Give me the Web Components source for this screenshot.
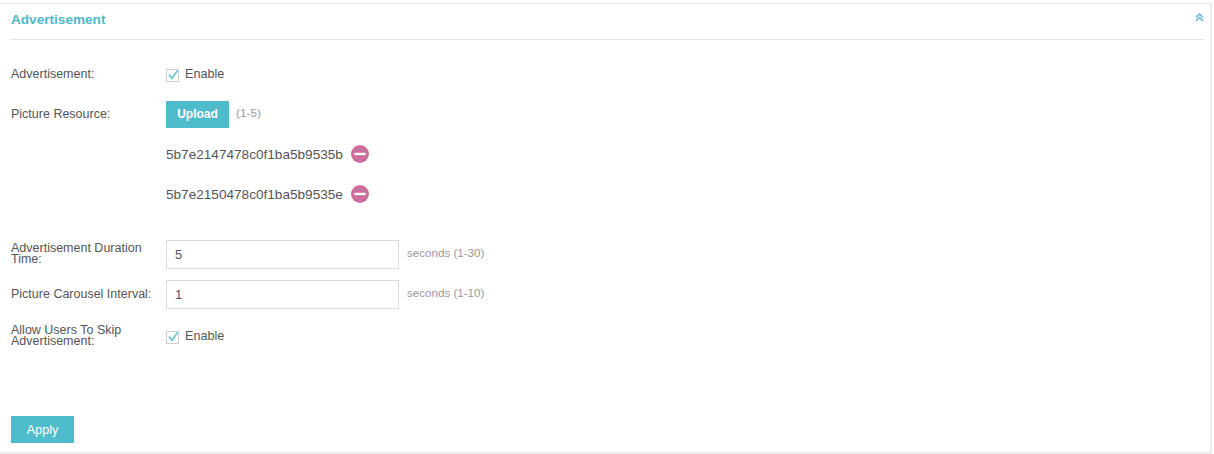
<!DOCTYPE html>
<html>
<head>
<meta charset="utf-8">
<style>
    html, body { margin: 0; padding: 0; background: #fff; }
    body { font-family: "Liberation Sans", Arial, sans-serif; font-size: 12px; color: #555; }
</style>
</head>
<body>
<ad-panel heading="Advertisement">
    <form-row label="Advertisement:"><check-box>Enable</check-box></form-row>
    <form-row label="Picture Resource:">
        <teal-button wide>Upload</teal-button><hint-text style="margin:0 0 2px 7px;font-size:11.8px">(1-5)</hint-text>
    </form-row>
    <form-row><file-item>5b7e2147478c0f1ba5b9535b</file-item></form-row>
    <form-row style="margin-bottom:20px"><file-item>5b7e2150478c0f1ba5b9535e</file-item></form-row>
    <form-row label="Advertisement Duration Time:"><text-field value="5"></text-field><hint-text style="margin:0 0 3px 8px">seconds (1-30)</hint-text></form-row>
    <form-row label="Picture Carousel Interval:"><text-field value="1"></text-field><hint-text style="margin:0 0 3px 8px">seconds (1-10)</hint-text></form-row>
    <form-row label="Allow Users To Skip Advertisement:" style="margin-top:2px"><check-box>Enable</check-box></form-row>
    <teal-button slot="footer">Apply</teal-button>
</ad-panel>

<script>
const panelTemplate = document.createElement('template');
panelTemplate.innerHTML = `
    <style>
        :host {
            display: block;
            box-sizing: border-box;
            width: 1212px;
            height: 451px;
            margin-top: 3px;
            border: 1px solid #ececec;
            border-left: 0;
            border-width: 1px 2px 2px 0;
            padding: 0 6px 0 10px;
        }
        .head {
            display: flex;
            align-items: center;
            justify-content: space-between;
            height: 35px;
            border-bottom: 1px solid #dfe3e6;
        }
        .title {
            font-size: 13.6px;
            font-weight: bold;
            color: #4cb9c9;
            padding: 0 0 5px 1px;
        }
        svg { width: 9px; height: 9px; margin: 0 0 8px 0; }
        .body { padding-top: 14px; }
        .foot { margin-top: 60px; padding-left: 1px; }
    </style>
    <div class="head">
        <span class="title"></span>
        <svg viewBox="0 0 9 9" fill="none" stroke="#6fbccb" stroke-width="1.6">
            <path d="M1 4.5 4.5 1 8 4.5"/>
            <path d="M1 8 4.5 4.5 8 8"/>
        </svg>
    </div>
    <div class="body"><slot></slot></div>
    <div class="foot"><slot name="footer"></slot></div>
`;

class AdPanel extends HTMLElement {
    constructor() {
        super();
        this.attachShadow({mode: 'open'});
        this.shadowRoot.appendChild(panelTemplate.content.cloneNode(true));
    }
    connectedCallback() {
        this.shadowRoot.querySelector('.title').textContent = this.getAttribute('heading');
    }
}

const rowTemplate = document.createElement('template');
rowTemplate.innerHTML = `
    <style>
        :host {
            display: flex;
            align-items: center;
            height: 40px;
        }
        .label {
            box-sizing: border-box;
            width: 156px;
            padding: 0 12px 0 1px;
            font-size: 12.5px;
            line-height: 11px;
            color: #555;
        }
        .control {
            display: flex;
            align-items: center;
        }
    </style>
    <div class="label"></div>
    <div class="control"><slot></slot></div>
`;

class FormRow extends HTMLElement {
    constructor() {
        super();
        this.attachShadow({mode: 'open'});
        this.shadowRoot.appendChild(rowTemplate.content.cloneNode(true));
    }
    connectedCallback() {
        this.shadowRoot.querySelector('.label').textContent = this.getAttribute('label') || '';
    }
}

const checkTemplate = document.createElement('template');
checkTemplate.innerHTML = `
    <style>
        :host {
            display: inline-flex;
            align-items: center;
            font-size: 12.6px;
            color: #555;
        }
        svg { width: 14px; height: 14px; margin: 1px 5px 0 0; }
    </style>
    <svg viewBox="0 0 14 14" fill="none">
        <rect x=".5" y="1.5" width="12" height="12" fill="#fff" stroke="#cfcfcf"/>
        <path d="M3 6.6 6 10.4 11.6 2.4" stroke="#6cc4d2" stroke-width="1.7"/>
    </svg>
    <slot></slot>
`;

class CheckBox extends HTMLElement {
    constructor() {
        super();
        this.attachShadow({mode: 'open'});
        this.shadowRoot.appendChild(checkTemplate.content.cloneNode(true));
    }
}

const buttonTemplate = document.createElement('template');
buttonTemplate.innerHTML = `
    <style>
        :host {
            display: inline-flex;
            align-items: center;
            justify-content: center;
            width: 63px;
            height: 27px;
            background: #4fbccb;
            color: #fff;
            font-size: 12.6px;
            cursor: pointer;
        }
        :host([wide]) { font-weight: bold; font-size: 12px; }
    </style>
    <slot></slot>
`;

class TealButton extends HTMLElement {
    constructor() {
        super();
        this.attachShadow({mode: 'open'});
        this.shadowRoot.appendChild(buttonTemplate.content.cloneNode(true));
    }
}

const hintTemplate = document.createElement('template');
hintTemplate.innerHTML = `
    <style>
        :host {
            display: inline-block;
            font-size: 11.6px;
            color: #999;
        }
    </style>
    <slot></slot>
`;

class HintText extends HTMLElement {
    constructor() {
        super();
        this.attachShadow({mode: 'open'});
        this.shadowRoot.appendChild(hintTemplate.content.cloneNode(true));
    }
}

const fileTemplate = document.createElement('template');
fileTemplate.innerHTML = `
    <style>
        :host {
            display: inline-flex;
            align-items: center;
            font-size: 13.6px;
            color: #555;
        }
        svg { width: 18px; height: 18px; margin-left: 8px; }
    </style>
    <slot></slot>
    <svg viewBox="0 0 18 18">
        <circle cx="9" cy="9" r="9" fill="#cc6f9c"/>
        <rect x="3.5" y="7.8" width="11" height="2.4" fill="#fff"/>
    </svg>
`;

class FileItem extends HTMLElement {
    constructor() {
        super();
        this.attachShadow({mode: 'open'});
        this.shadowRoot.appendChild(fileTemplate.content.cloneNode(true));
    }
}

const fieldTemplate = document.createElement('template');
fieldTemplate.innerHTML = `
    <style>
        :host { display: inline-block; }
        input {
            display: block;
            box-sizing: border-box;
            width: 233px;
            height: 29px;
            border: 1px solid #dcdcdc;
            padding: 0 8px;
            font: 13px "Liberation Sans", Arial, sans-serif;
            color: #555;
            outline: none;
        }
    </style>
    <input type="text">
`;

class TextField extends HTMLElement {
    constructor() {
        super();
        this.attachShadow({mode: 'open'});
        this.shadowRoot.appendChild(fieldTemplate.content.cloneNode(true));
    }
    connectedCallback() {
        this.shadowRoot.querySelector('input').setAttribute('value', this.getAttribute('value'));
    }
}

window.customElements.define('ad-panel', AdPanel);
window.customElements.define('form-row', FormRow);
window.customElements.define('check-box', CheckBox);
window.customElements.define('teal-button', TealButton);
window.customElements.define('hint-text', HintText);
window.customElements.define('file-item', FileItem);
window.customElements.define('text-field', TextField);
</script>
</body>
</html>
